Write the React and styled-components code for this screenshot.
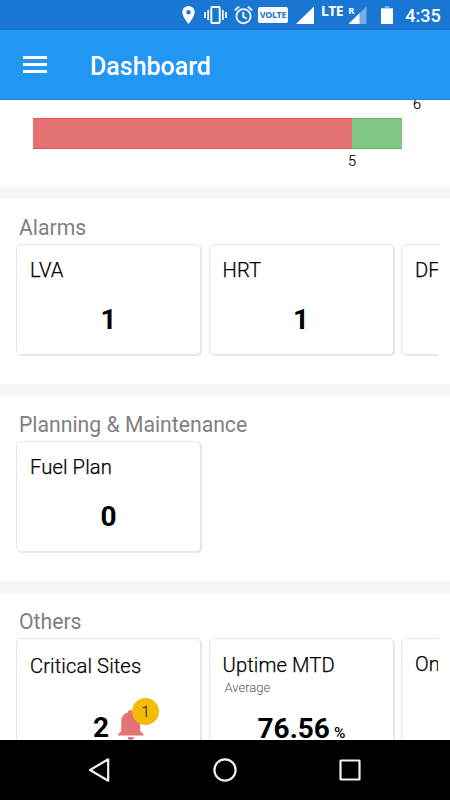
import React from "react";
import styled, { createGlobalStyle } from "styled-components";

const alarms = [
  { title: "LVA", value: "1" },
  { title: "HRT", value: "1" },
  { title: "DF", value: "" },
];

const plans = [{ title: "Fuel Plan", value: "0" }];

function App() {
  return (
    <>
      <GlobalStyle />
      <Screen>
        <StatusBar />
        <AppBar>
          <MenuButton aria-label="Menu">
            <span />
            <span />
            <span />
          </MenuButton>
          <h1>Dashboard</h1>
        </AppBar>
        <Content>
          <Chart>
            <TotalLabel>6</TotalLabel>
            <Bars>
              <Bar $size={319} $color="#e57373" $edge="#e05252" />
              <Bar $size={50} $color="#81c784" $edge="#5fb963" />
            </Bars>
            <BarLabel>5</BarLabel>
          </Chart>

          <Section>
            <SectionTitle>Alarms</SectionTitle>
            <Cards>
              {alarms.map((item) => (
                <Card key={item.title}>
                  <CardTitle>{item.title}</CardTitle>
                  <Value>{item.value}</Value>
                </Card>
              ))}
            </Cards>
          </Section>

          <Section>
            <SectionTitle>Planning &amp; Maintenance</SectionTitle>
            <Cards>
              {plans.map((item) => (
                <Card key={item.title}>
                  <CardTitle>{item.title}</CardTitle>
                  <Value>{item.value}</Value>
                </Card>
              ))}
            </Cards>
          </Section>

          <Section>
            <SectionTitle>Others</SectionTitle>
            <Cards>
              <Card>
                <CardTitle $top={15}>Critical Sites</CardTitle>
                <SitesValue>
                  2
                  <Alert>
                    <svg
                      width="28"
                      height="36"
                      viewBox="0 1 28 38"
                      preserveAspectRatio="none"
                    >
                      <path
                        d="M13.5 1c1.7 0 2.6 1 2.6 2.6 4.600 1.300 7 5 7 9.600v8.300c0 2 1.200 3.300 3.400 4.800V28H1v-1.700c2.200-1.500 3.200-2.800 3.200-4.800v-8.300c0-4.600 2.100-8.300 6.700-9.600C10.900 2 11.800 1 13.500 1zM10.500 29.500h6.400c0 2-1.300 3-3.200 3s-3.200-1-3.200-3z"
                        fill="#e57373"
                      />
                    </svg>
                    <Badge>1</Badge>
                  </Alert>
                </SitesValue>
              </Card>
              <Card>
                <CardTitle $top={14}>Uptime MTD</CardTitle>
                <Caption>Average</Caption>
                <UptimeValue>
                  76.56<small>%</small>
                </UptimeValue>
              </Card>
              <Card>
                <CardTitle $top={13}>On</CardTitle>
              </Card>
            </Cards>
          </Section>
        </Content>
        <NavBar>
          <svg width="24" height="26" viewBox="0 0 24 26">
            <path d="M20.200 2.300v21.400L2 13z" />
          </svg>
          <svg width="24" height="26" viewBox="0 0 24 26">
            <circle cx="12" cy="13" r="10.600" />
          </svg>
          <svg width="24" height="26" viewBox="0 0 24 26">
            <rect x="2.500" y="3.500" width="19" height="19" rx="0.500" />
          </svg>
        </NavBar>
      </Screen>
    </>
  );
}

function StatusBar() {
  return (
    <Status>
      <svg width="13" height="18" viewBox="0 0 13 18">
        <path
          d="M6.500 0A6.200 6.200 0 0 0 .3 6.200C.3 10.800 6.500 18 6.500 18s6.200-7.200 6.200-11.800A6.200 6.200 0 0 0 6.500 0zm0 8.400a2.200 2.200 0 1 1 0-4.400 2.200 2.200 0 0 1 0 4.400z"
          fill="#fff"
        />
      </svg>
      <Gap $width={9} />
      <svg width="23" height="18" viewBox="0 0 23 18">
        <path
          d="M1 6v6M4.200 4v10M22 6v6M18.800 4v10"
          stroke="#fff"
          strokeWidth="1.700"
        />
        <rect
          x="7.300"
          y="1"
          width="8.400"
          height="16"
          rx="1"
          fill="none"
          stroke="#fff"
          strokeWidth="1.900"
        />
      </svg>
      <Gap $width={7} />
      <svg width="19" height="19" viewBox="0 0 19 19">
        <g fill="none" stroke="#fff" strokeWidth="1.800">
          <circle cx="9.500" cy="10.200" r="7.100" />
          <path d="M9.300 6v4.700l3.500 2.100M.8 4.300L5.100.7M18.200 4.300L13.900.7" />
        </g>
      </svg>
      <Gap $width={5} />
      <Volte>VOLTE</Volte>
      <Gap $width={8} />
      <svg width="18" height="18" viewBox="0 0 18 18">
        <path d="M18 .5V18H0z" fill="#fff" />
      </svg>
      <Gap $width={7} />
      <Network $size={14} $width={22}>
        LTE
      </Network>
      <Gap $width={5} />
      <Roaming>
        <svg width="19" height="18" viewBox="0 0 19 18">
          <path d="M18.500 .5V18H.5z" fill="#75ade4" />
          <path d="M11.500 7.300V18H.5z" fill="#fff" />
        </svg>
        <Network $size={9.5}>R</Network>
      </Roaming>
      <Gap $width={14} />
      <svg width="12" height="18" viewBox="0 0 12 18">
        <path d="M3.500 0h5v2H12v2H0V2h3.500z" fill="#75ade4" />
        <path d="M0 2.500h12V17a1 1 0 0 1-1 1H1a1 1 0 0 1-1-1z" fill="#fff" />
      </svg>
      <Gap $width={12} />
      <Clock>4:35</Clock>
    </Status>
  );
}

const GlobalStyle = createGlobalStyle`
  * {
    box-sizing: border-box;
  }

  body {
    margin: 0;
    font-family: Roboto, "Liberation Sans", sans-serif;
    background: #fff;
  }
`;

const Screen = styled.div`
  display: flex;
  flex-direction: column;
  width: 450px;
  height: 800px;
  overflow: hidden;
  background: #fff;
`;

const Status = styled.div`
  display: flex;
  align-items: flex-start;
  flex: 0 0 30px;
  padding: 6px 0 0 182px;
  background: #1976d2;
  color: #fff;

  svg {
    flex: none;
  }
`;

const Gap = styled.span`
  flex: 0 0 ${(props) => props.$width}px;
`;

const Volte = styled.span`
  flex: 0 0 30px;
  height: 16px;
  margin-top: 1px;
  border-radius: 2px;
  background: #fff;
  color: #1976d2;
  font: 700 9px/16px "Noto Sans", sans-serif;
  letter-spacing: -0.3px;
  text-align: center;
`;

const Network = styled.span`
  flex: 0 0 ${(props) => (props.$width ? `${props.$width}px` : "auto")};
  margin-top: -1px;
  font: 700 ${(props) => props.$size}px/12px "Noto Sans", sans-serif;
  letter-spacing: -0.4px;
`;

const Roaming = styled.span`
  position: relative;
  flex: 0 0 19px;
  height: 18px;

  ${Network} {
    position: absolute;
    top: 0;
    left: 0;
  }
`;

const Clock = styled.span`
  font-size: 18px;
  font-weight: 500;
  line-height: 20px;
`;

const AppBar = styled.header`
  display: flex;
  align-items: center;
  flex: 0 0 70px;
  padding: 0 23px;
  background: #2196f3;
  border-bottom: 1px solid #1b86e3;
  color: #fff;

  h1 {
    margin: 4px 0 0 43px;
    font-size: 25px;
    font-weight: 500;
    line-height: 30px;
  }
`;

const MenuButton = styled.button`
  display: flex;
  flex-direction: column;
  justify-content: space-between;
  width: 24px;
  height: 17px;
  padding: 0;
  border: 0;
  background: none;

  span {
    height: 3px;
    background: #fff;
  }
`;

const Content = styled.main`
  flex: 1;
  min-height: 0;
  overflow: hidden;
`;

const Chart = styled.div`
  display: flow-root;
  height: 87px;
  padding: 0 29px 0 33px;
  font-size: 14.5px;
  font-weight: 300;
  line-height: 16px;
  -webkit-text-stroke: 0.2px;
`;

const TotalLabel = styled.div`
  height: 18px;
  margin-top: -3px;
  text-align: right;
`;

const Bars = styled.div`
  display: flex;
  width: 369px;
  height: 31px;
  margin-top: 3px;
`;

const Bar = styled.div`
  flex: ${(props) => props.$size};
  background: ${(props) => props.$color};
  border: solid ${(props) => props.$edge};
  border-width: 1px 0;
`;

const BarLabel = styled.div`
  padding: 5px 0 0 315px;
`;

const Section = styled.section`
  height: 197px;
  padding: 17px 12px 0 16px;
  border-top: 12px solid #f6f6f6;
`;

const SectionTitle = styled.h2`
  margin: 0 0 4px 3px;
  color: #808080;
  font-size: 21.2px;
  font-weight: 400;
  line-height: 24px;
`;

const Cards = styled.div`
  display: flex;
  gap: 7.500px;
  height: 114px;
  overflow: hidden;
`;

const Card = styled.article`
  display: flex;
  flex-direction: column;
  flex: 0 0 185px;
  height: 111px;
  border: 1px solid #e6e6e6;
  border-radius: 5px;
  box-shadow: 1px 1px 1px #e6e6e6;
  background: #fff;
`;

const CardTitle = styled.h3`
  margin: ${(props) => props.$top || 13}px 0 0 13px;
  font-size: 20.2px;
  font-weight: 300;
  letter-spacing: 0.1px;
  line-height: 25px;
  white-space: nowrap;
  -webkit-text-stroke: 0.25px;
`;

const Value = styled.strong`
  margin-top: 20px;
  font-size: 28px;
  line-height: 34px;
  text-align: center;
`;

const SitesValue = styled(Value)`
  display: flex;
  margin: 32px 0 0 76px;
`;

const Alert = styled.span`
  position: relative;
  display: block;
  margin: -1px 0 0 8px;

  svg {
    display: block;
  }
`;

const Badge = styled.span`
  position: absolute;
  top: -12px;
  left: 15px;
  width: 27px;
  height: 27px;
  border-radius: 50%;
  background: #f2bc05;
  font-size: 15px;
  font-weight: 300;
  line-height: 28px;
`;

const Caption = styled.span`
  margin: 2px 0 0 15px;
  color: #555;
  font-size: 13px;
  font-weight: 300;
  line-height: 15px;
`;

const UptimeValue = styled(Value)`
  margin: 17px 0 0 48px;
  text-align: left;

  small {
    margin-left: 4px;
    font-size: 15.5px;
    font-weight: 500;
  }
`;

const NavBar = styled.nav`
  display: flex;
  justify-content: space-between;
  align-items: center;
  flex: 0 0 60px;
  padding: 0 88px;
  background: #000;

  svg {
    fill: none;
    stroke: #f2f2f2;
    stroke-width: 2.200;
    stroke-linejoin: round;
  }
`;

export default App;
